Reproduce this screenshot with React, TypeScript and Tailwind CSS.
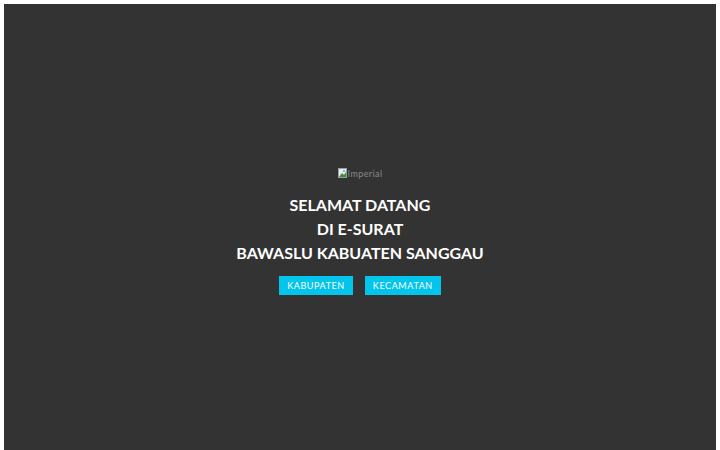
import React from 'react';

const HeroButton = ({ label }: { label: string }) => (
  <a
    href="#"
    className="inline-flex items-center justify-center h-[19px] px-[8px] bg-[#03c4eb] text-white text-[9px] tracking-[0.6px] leading-none"
  >
    {label}
  </a>
);

const BrokenImage = () => (
  <div className="flex items-end gap-[1px] text-[9px] leading-none text-[#8a8a8a]">
    <svg width="9" height="10" viewBox="0 0 9 10">
      <rect x="0.5" y="0.5" width="8" height="9" fill="#e9ece9" stroke="#9aa09a" />
      <path d="M1 9 L4 5 L6 7 L8 4 L8 9 Z" fill="#3c8a3c" />
      <circle cx="6" cy="3" r="1" fill="#6aa0d0" />
    </svg>
    <span className="tracking-[0.4px]">Imperial</span>
  </div>
);

export default function App() {
  return (
    <div className="h-[450px] overflow-hidden bg-white pt-[4px] px-[4px]" style={{ fontFamily: 'Lato, "Open Sans", sans-serif' }}>
      <section className="h-[446px] bg-[#333333] flex flex-col items-center pt-[164px]">
        <BrokenImage />
        <h1 className="mt-[15px] text-white font-bold text-[16px] leading-[24px] text-center">
          SELAMAT DATANG
          <br />
          DI E-SURAT
          <br />
          BAWASLU KABUATEN SANGGAU
        </h1>
        <div className="mt-[11px] flex gap-[12px]">
          <HeroButton label="KABUPATEN" />
          <HeroButton label="KECAMATAN" />
        </div>
      </section>
    </div>
  );
}
